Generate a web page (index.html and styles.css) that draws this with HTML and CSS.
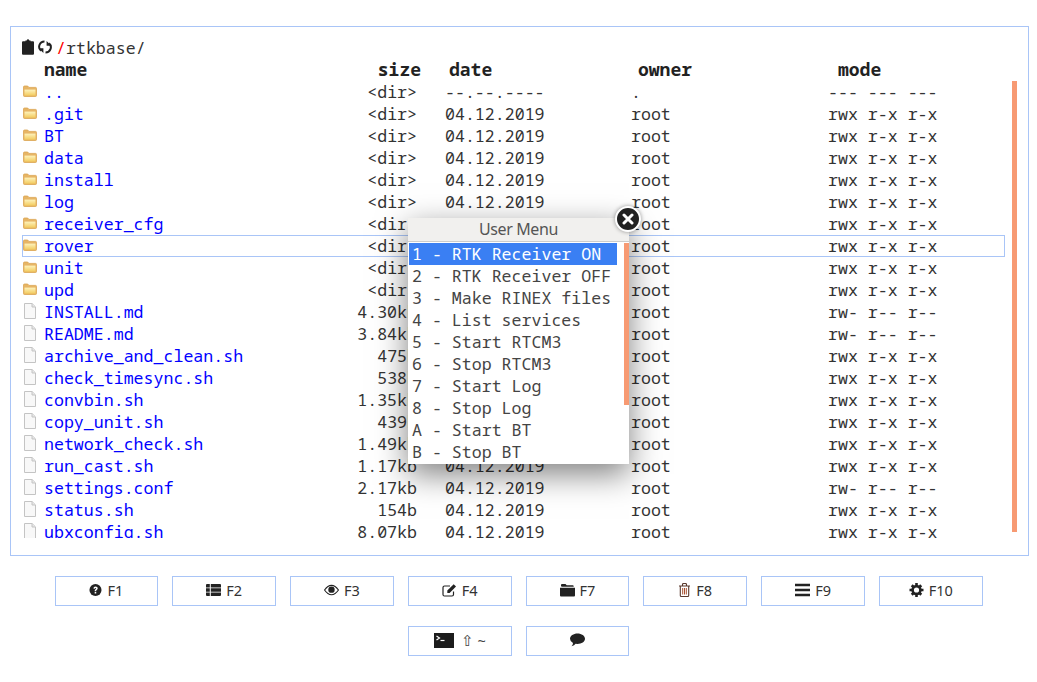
FILE: index.html
```html
<!DOCTYPE html>
<html lang="en">
<head>
  <meta charset="UTF-8">
  <meta name="viewport" content="width=device-width, initial-scale=1.0">
  <title>rtkbase</title>
  <link rel="stylesheet" href="styles.css">
</head>
<body>

<svg class="defs" width="0" height="0" aria-hidden="true">
  <defs>
    <linearGradient id="folderFill" x1="0" y1="0" x2="0" y2="1">
      <stop offset="0" stop-color="#fdf3bd"/>
      <stop offset="1" stop-color="#f3cb5e"/>
    </linearGradient>
    <symbol id="folder" viewBox="0 0 14 12">
      <path d="M.5 10.500V2q0-1 1-1h3.200l1.200 1.400h6.600q1 0 1 1v7.100q0 1-1 1h-11q-1 0-1-1z" fill="#e7b565" stroke="#dba552" stroke-width=".8"/>
      <path d="M1.500 4.600h11v6h-11z" fill="url(#folderFill)"/>
    </symbol>
    <symbol id="file" viewBox="0 0 14 16">
      <path d="M1.500.5h7.600l3.400 3.400v11.600h-11z" fill="#f8f8f8" stroke="#c4c4c4"/>
      <path d="M9 .7v3.300h3.300" fill="#e6e6e6" stroke="#c4c4c4"/>
    </symbol>
  </defs>
</svg>

<div class="panel">
  <div class="path">
    <svg class="path-icon" viewBox="0 0 12 16"><path d="M1 2.200h2.400V1.400h1.300Q5 .2 6 .2t1.300 1.200h1.300v.8H11q1 0 1 1v11.600q0 1-1 1H1q-1 0-1-1V3.200q0-1 1-1z" fill="#222"/></svg>
    <svg class="path-icon reload" viewBox="0 0 14 14"><path d="M6.500 1.500A5.300 5.300 0 0 0 3 10.800M7.500 12.500A5.300 5.300 0 0 0 11 3.200" fill="none" stroke="#222" stroke-width="2"/><path d="M.6 8.300h4.800v4.800zM13.400 5.700H8.600V.9z" fill="#222"/></svg>
    <span class="slash">/</span><span>rtkbase/</span>
  </div>
  <div class="row head">
    <span class="icon"></span><span class="name">name</span><span class="size">size</span><span class="date">date</span><span class="owner">owner</span><span class="mode">mode</span>
  </div>
  <div class="list">
    <div class="row"><svg class="icon"><use href="#folder"/></svg><a class="name">..</a><span class="size">&lt;dir&gt;</span><span class="date">--.--.----</span><span class="owner">.</span><span class="mode">--- --- ---</span></div>
    <div class="row"><svg class="icon"><use href="#folder"/></svg><a class="name">.git</a><span class="size">&lt;dir&gt;</span><span class="date">04.12.2019</span><span class="owner">root</span><span class="mode">rwx r-x r-x</span></div>
    <div class="row"><svg class="icon"><use href="#folder"/></svg><a class="name">BT</a><span class="size">&lt;dir&gt;</span><span class="date">04.12.2019</span><span class="owner">root</span><span class="mode">rwx r-x r-x</span></div>
    <div class="row"><svg class="icon"><use href="#folder"/></svg><a class="name">data</a><span class="size">&lt;dir&gt;</span><span class="date">04.12.2019</span><span class="owner">root</span><span class="mode">rwx r-x r-x</span></div>
    <div class="row"><svg class="icon"><use href="#folder"/></svg><a class="name">install</a><span class="size">&lt;dir&gt;</span><span class="date">04.12.2019</span><span class="owner">root</span><span class="mode">rwx r-x r-x</span></div>
    <div class="row"><svg class="icon"><use href="#folder"/></svg><a class="name">log</a><span class="size">&lt;dir&gt;</span><span class="date">04.12.2019</span><span class="owner">root</span><span class="mode">rwx r-x r-x</span></div>
    <div class="row"><svg class="icon"><use href="#folder"/></svg><a class="name">receiver_cfg</a><span class="size">&lt;dir&gt;</span><span class="date">04.12.2019</span><span class="owner">root</span><span class="mode">rwx r-x r-x</span></div>
    <div class="row current"><svg class="icon"><use href="#folder"/></svg><a class="name">rover</a><span class="size">&lt;dir&gt;</span><span class="date">04.12.2019</span><span class="owner">root</span><span class="mode">rwx r-x r-x</span></div>
    <div class="row"><svg class="icon"><use href="#folder"/></svg><a class="name">unit</a><span class="size">&lt;dir&gt;</span><span class="date">04.12.2019</span><span class="owner">root</span><span class="mode">rwx r-x r-x</span></div>
    <div class="row"><svg class="icon"><use href="#folder"/></svg><a class="name">upd</a><span class="size">&lt;dir&gt;</span><span class="date">04.12.2019</span><span class="owner">root</span><span class="mode">rwx r-x r-x</span></div>
    <div class="row"><svg class="icon"><use href="#file"/></svg><a class="name">INSTALL.md</a><span class="size">4.30kb</span><span class="date">04.12.2019</span><span class="owner">root</span><span class="mode">rw- r-- r--</span></div>
    <div class="row"><svg class="icon"><use href="#file"/></svg><a class="name">README.md</a><span class="size">3.84kb</span><span class="date">04.12.2019</span><span class="owner">root</span><span class="mode">rw- r-- r--</span></div>
    <div class="row"><svg class="icon"><use href="#file"/></svg><a class="name">archive_and_clean.sh</a><span class="size">475b</span><span class="date">04.12.2019</span><span class="owner">root</span><span class="mode">rwx r-x r-x</span></div>
    <div class="row"><svg class="icon"><use href="#file"/></svg><a class="name">check_timesync.sh</a><span class="size">538b</span><span class="date">04.12.2019</span><span class="owner">root</span><span class="mode">rwx r-x r-x</span></div>
    <div class="row"><svg class="icon"><use href="#file"/></svg><a class="name">convbin.sh</a><span class="size">1.35kb</span><span class="date">04.12.2019</span><span class="owner">root</span><span class="mode">rwx r-x r-x</span></div>
    <div class="row"><svg class="icon"><use href="#file"/></svg><a class="name">copy_unit.sh</a><span class="size">439b</span><span class="date">04.12.2019</span><span class="owner">root</span><span class="mode">rwx r-x r-x</span></div>
    <div class="row"><svg class="icon"><use href="#file"/></svg><a class="name">network_check.sh</a><span class="size">1.49kb</span><span class="date">04.12.2019</span><span class="owner">root</span><span class="mode">rwx r-x r-x</span></div>
    <div class="row"><svg class="icon"><use href="#file"/></svg><a class="name">run_cast.sh</a><span class="size">1.17kb</span><span class="date">04.12.2019</span><span class="owner">root</span><span class="mode">rwx r-x r-x</span></div>
    <div class="row"><svg class="icon"><use href="#file"/></svg><a class="name">settings.conf</a><span class="size">2.17kb</span><span class="date">04.12.2019</span><span class="owner">root</span><span class="mode">rw- r-- r--</span></div>
    <div class="row"><svg class="icon"><use href="#file"/></svg><a class="name">status.sh</a><span class="size">154b</span><span class="date">04.12.2019</span><span class="owner">root</span><span class="mode">rwx r-x r-x</span></div>
    <div class="row"><svg class="icon"><use href="#file"/></svg><a class="name">ubxconfig.sh</a><span class="size">8.07kb</span><span class="date">04.12.2019</span><span class="owner">root</span><span class="mode">rwx r-x r-x</span></div>
  </div>
  <div class="scrollbar"></div>
</div>

<div class="menu">
  <div class="menu-title">User Menu</div>
  <div class="menu-list">
    <div class="menu-item selected">1 - RTK Receiver ON</div>
    <div class="menu-item">2 - RTK Receiver OFF</div>
    <div class="menu-item">3 - Make RINEX files</div>
    <div class="menu-item">4 - List services</div>
    <div class="menu-item">5 - Start RTCM3</div>
    <div class="menu-item">6 - Stop RTCM3</div>
    <div class="menu-item">7 - Start Log</div>
    <div class="menu-item">8 - Stop Log</div>
    <div class="menu-item">A - Start BT</div>
    <div class="menu-item">B - Stop BT</div>
  </div>
  <div class="menu-scroll"></div>
  <div class="menu-close">
    <svg viewBox="0 0 12 12" width="12" height="12"><path d="M2 2l8 8M10 2l-8 8" stroke="#fff" stroke-width="3" stroke-linecap="round"/></svg>
  </div>
</div>

<div class="toolbar">
  <button type="button">
    <svg viewBox="0 0 14 14"><circle cx="7" cy="7" r="6.500" fill="#222"/><path d="M4.700 5.400Q4.800 3.300 7.100 3.300 9.400 3.400 9.400 5.200 9.400 6.300 8.300 7 7.700 7.400 7.700 8.200H6.100Q6.100 6.900 7 6.200 7.700 5.700 7.700 5.200 7.600 4.800 7 4.800 6.400 4.800 6.300 5.600zM6.100 9h1.700v1.700H6.100z" fill="#fff"/></svg>
    F1
  </button>
  <button type="button">
    <svg class="wide" viewBox="0 0 15 12"><path d="M0 1q0-1 1-1h2.800v3.400H0zM0 4.300h3.800v3.400H0zM0 8.600h3.800V12H1q-1 0-1-1zM4.800 0H14q1 0 1 1v2.400H4.800zM4.800 4.300H15v3.400H4.800zM4.800 8.600H15V11q0 1-1 1H4.800z" fill="#222"/></svg>
    F2
  </button>
  <button type="button">
    <svg class="wide" viewBox="0 0 16 12"><path d="M.6 6Q4 1 8 1t7.400 5Q12 11 8 11T.6 6z" fill="none" stroke="#222" stroke-width="1.200"/><circle cx="8" cy="5.600" r="3.400" fill="#222"/></svg>
    F3
  </button>
  <button type="button">
    <svg class="wide" viewBox="0 0 15 14"><path d="M11.500 8.500V11.500Q11.500 13 10 13H2.500Q1 13 1 11.500V4.500Q1 3 2.500 3H8" fill="none" stroke="#222" stroke-width="1.200"/><path d="M5.300 7.600L11.700 1.200 14 3.500 7.600 9.900H5.300z" fill="#222"/></svg>
    F4
  </button>
  <button type="button">
    <svg class="wide" viewBox="0 0 15 13"><path d="M1 2.200V1.500Q1 .500 2 .500h3.500l1.200 1.200h6q1 0 1 1v.5H2Q1 3.200 1 2.200z" fill="#222"/><path d="M0 4.200h15V12q0 1-1 1H1q-1 0-1-1z" fill="#222"/></svg>
    F7
  </button>
  <button type="button">
    <svg viewBox="0 0 12 14"><path d="M.5 3h11M4 3V1.500q0-1 1-1h2q1 0 1 1V3M1.800 3v9.500q0 1 1 1h6.400q1 0 1-1V3" fill="none" stroke="#5b3a2e" stroke-width="1.100"/><path d="M4.200 5v6.500M6 5v6.500M7.800 5v6.500" stroke="#a8502e" stroke-width="1"/></svg>
    F8
  </button>
  <button type="button">
    <svg class="wide" viewBox="0 0 13 11"><path d="M0 0h13v2.200H0zM0 4.400h13v2.200H0zM0 8.800h13V11H0z" fill="#222"/></svg>
    F9
  </button>
  <button type="button">
    <svg class="wide" viewBox="0 0 14 14"><circle cx="7" cy="7" r="3.900" fill="none" stroke="#222" stroke-width="2.600"/><path d="M5.700 0h2.600v3H5.700zM5.700 11h2.600v3H5.700zM0 5.700h3v2.600H0zM11 5.700h3v2.600h-3zM1.300 3.200L3.200 1.300l2 2-1.900 1.900zM8.800 10.700l1.900-1.900 2 2-1.900 1.900zM10.700 1.300l2 1.900-2 2-1.900-1.900zM3.300 8.800l1.900 1.900-2 2-1.900-1.900z" fill="#222"/></svg>
    F10
  </button>
  <button type="button">
    <svg class="term" viewBox="0 0 20 15"><rect width="20" height="15" fill="#1c1c1c"/><path d="M2.500 3l3 2-3 2" fill="none" stroke="#fff" stroke-width="1.200"/><path d="M6.500 7.500h4" stroke="#fff" stroke-width="1.200"/></svg>
    <span class="shift">⇧ ~</span>
  </button>
  <button type="button">
    <svg class="wide" viewBox="0 0 15 14"><path d="M7.500 0.500C11.600 .5 15 2.800 15 5.700s-3.400 5.200-7.500 5.200q-1 0-1.900-.1Q4.500 12.500 1.500 13.200 3 11.800 3 9.900 0 8.400 0 5.700C0 2.800 3.400.5 7.500.5z" fill="#222"/></svg>
  </button>
</div>

</body>
</html>
```

FILE: styles.css
```css
* {
  box-sizing: border-box;
}

body {
  margin: 0;
  background: #fff;
  font-family: "Noto Sans Mono", "DejaVu Sans Mono", monospace;
  font-size: 16.6px;
  color: #333;
}

.defs {
  position: absolute;
}

.panel {
  position: relative;
  width: 1019px;
  height: 530px;
  margin: 26px 0 0 10px;
  padding: 10px 11px 0;
  border: 1px solid #a9c5f7;
  overflow: hidden;
}

.path {
  display: flex;
  align-items: center;
  height: 22px;
  padding-bottom: 2px;
}

.path-icon {
  width: 12px;
  height: 16px;
  margin-right: 4px;
}

.path-icon.reload {
  width: 14px;
  height: 14px;
  margin-right: 4px;
}

.slash {
  color: #f00;
}

.list {
  height: 457px;
  overflow: hidden;
}

.row {
  display: flex;
  align-items: center;
  width: 983px;
  height: 22px;
  padding-bottom: 2px;
  white-space: pre;
}

.row.current {
  outline: 1px solid #a9c5f7;
  outline-offset: -1px;
}

.head {
  font-size: 18px;
  font-weight: bold;
  color: #222;
}

.icon {
  flex: none;
  width: 14px;
  height: 16px;
  margin: 0 8px 0 1px;
}

.name {
  width: 300px;
  margin-left: -1px;
  color: #00f;
}

.head .name {
  color: #222;
}

.size {
  width: 73px;
  text-align: right;
}

.date {
  width: 186px;
  margin-left: 28px;
}

.owner {
  width: 197px;
}

.mode {
  width: 110px;
}

.head .size {
  width: 77px;
}

.head .date {
  width: 189px;
  margin-left: 28px;
}

.head .owner {
  width: 200px;
}

.scrollbar {
  position: absolute;
  top: 54px;
  left: 1001px;
  width: 5px;
  height: 451px;
  background: #f79a73;
}

.menu {
  position: absolute;
  top: 218px;
  left: 408px;
  width: 221px;
  height: 246px;
  background: #fff;
  box-shadow: 0 10px 30px rgba(0, 0, 0, 0.5);
}

.menu-title {
  height: 24px;
  border-bottom: 1px solid #ccc;
  background: #f1f0ee;
  color: #555;
  font-family: "Noto Sans", sans-serif;
  font-size: 16px;
  letter-spacing: -0.4px;
  line-height: 22px;
  text-align: center;
}

.menu-list {
  padding: 1px 0 0 1px;
  color: #444;
}

.menu-item {
  width: 208px;
  height: 22px;
  padding-left: 3px;
  line-height: 22px;
  white-space: pre;
}

.menu-item.selected {
  background: #3a7ff3;
  color: #fff;
}

.menu-scroll {
  position: absolute;
  top: 25px;
  right: 0;
  width: 5px;
  height: 162px;
  background: #f79a73;
}

.menu-close {
  position: absolute;
  top: -12px;
  right: -12px;
  display: flex;
  align-items: center;
  justify-content: center;
  width: 26px;
  height: 26px;
  border: 2px solid #fff;
  border-radius: 50%;
  background: #222;
  box-shadow: 0 0 4px rgba(0, 0, 0, 0.4);
}

.toolbar {
  display: flex;
  flex-wrap: wrap;
  justify-content: center;
  gap: 20px 14.2px;
  width: 930px;
  margin: 20px 0 0 53.6px;
}

button {
  display: flex;
  align-items: center;
  justify-content: center;
  gap: 5px;
  width: 103.6px;
  height: 30px;
  padding: 0 0 2px;
  border: 1px solid #a9c5f7;
  background: #fff;
  color: #333;
  font-family: "Noto Sans", sans-serif;
  font-size: 14.5px;
}

button svg {
  width: 13px;
  height: 14px;
}

button svg.wide {
  width: 15px;
}

button svg.term {
  width: 20px;
  height: 15px;
  margin-right: 2px;
}

.shift {
  color: #444;
}
```
